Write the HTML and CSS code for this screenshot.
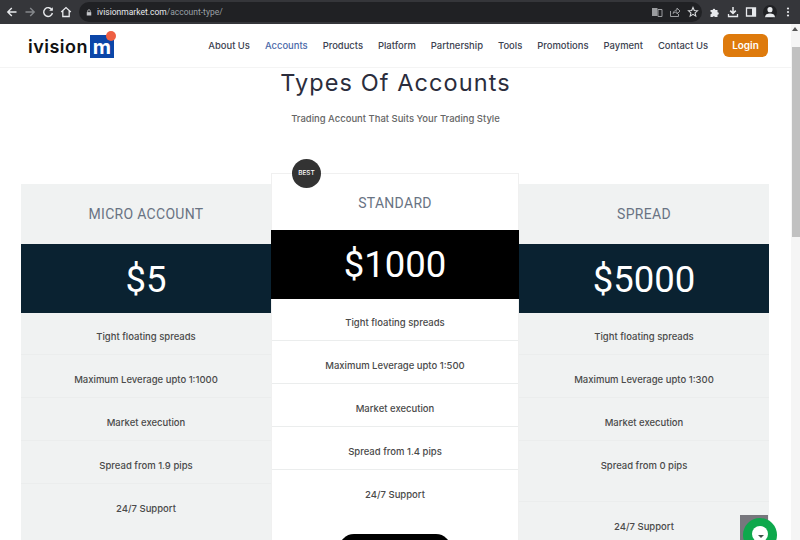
FILE: index.html
```html
<!DOCTYPE html>
<html lang="en">
<head>
<meta charset="utf-8">
<title>Types Of Accounts</title>
<link rel="stylesheet" href="styles.css">
</head>
<body>
<header class="chrome">
  <div class="chrome-nav">
    <svg class="ci" viewBox="0 0 12 12"><path d="M10.5 6H2M5.8 2 1.8 6l4 4" fill="none" stroke="#e8eaed" stroke-width="1.4"/></svg>
    <svg class="ci" viewBox="0 0 12 12"><path d="M1.5 6H10M6.2 2l4 4-4 4" fill="none" stroke="#85888c" stroke-width="1.4"/></svg>
    <svg class="ci" viewBox="0 0 12 12"><path d="M10 4A4.4 4.4 0 1 0 10.4 7" fill="none" stroke="#e8eaed" stroke-width="1.4"/><path d="M10.8 1.2v3.6H7.2z" fill="#e8eaed"/></svg>
    <svg class="ci" viewBox="0 0 12 12"><path d="M1.2 6 6 1.600 10.800 6M2.800 5v5.500h6.400V5" fill="none" stroke="#e8eaed" stroke-width="1.300"/></svg>
  </div>
  <div class="omnibox">
    <svg class="lock" viewBox="0 0 8 10"><path d="M1 4.500h6V9H1z" fill="#c4c7ca"/><path d="M2.300 4.500V3a1.700 1.700 0 0 1 3.400 0v1.500" fill="none" stroke="#c4c7ca"/></svg>
    <span class="url">ivisionmarket.com<span class="url-path">/account-type/</span></span>
    <span class="omni-icons">
      <svg class="ci" viewBox="0 0 12 12"><path d="M1 2h5.500v8H1z" fill="#9a9c9f"/><path d="M7 3.500h4v7H7z" fill="none" stroke="#9a9c9f"/></svg>
      <svg class="ci" viewBox="0 0 12 12"><path d="M1.500 5v5.500h8V8M4 7.500C4.500 5 6.500 4 8 4V2l3 3-3 3V6C6.500 6 5 6.300 4 7.500z" fill="none" stroke="#9a9c9f"/></svg>
      <svg class="ci" viewBox="0 0 12 12"><path d="m6 1.500 1.300 3 3.200.3-2.400 2.100.7 3.200L6 8.400l-2.800 1.700.7-3.200L1.500 4.800l3.200-.3z" fill="none" stroke="#d8dadd" stroke-width="1.100"/></svg>
    </span>
  </div>
  <div class="chrome-ext">
    <svg class="ci" viewBox="0 0 12 12"><path d="M1.500 4h2.200a1.300 1.300 0 0 1 2.600 0h2.200v2.200a1.300 1.300 0 0 1 0 2.600v2.200h-2.500a1.300 1.300 0 0 0-2.400 0H1.500V8.300a1.300 1.300 0 0 0 0-2.600z" fill="#e8eaed"/></svg>
    <svg class="ci" viewBox="0 0 12 12"><path d="M6 1v6M3.200 4.600 6 7.400l2.800-2.800" fill="none" stroke="#e8eaed" stroke-width="1.500"/><path d="M1.500 8v2.500h9V8" fill="none" stroke="#e8eaed" stroke-width="1.300"/></svg>
    <svg class="ci" viewBox="0 0 12 12"><path d="M1.500 2h9v8h-9z" fill="none" stroke="#e8eaed" stroke-width="1.300"/><path d="M7 2h3.500v8H7z" fill="#e8eaed"/></svg>
    <span class="avatar"><svg viewBox="0 0 12 12"><circle cx="6" cy="4" r="2.200" fill="#e8eaed"/><path d="M1.800 10.500c0-2.500 2-3.300 4.200-3.300s4.200.8 4.200 3.300z" fill="#e8eaed"/></svg></span>
    <svg class="ci" viewBox="0 0 12 12"><circle cx="6" cy="2.500" r="1.100" fill="#e8eaed"/><circle cx="6" cy="6" r="1.100" fill="#e8eaed"/><circle cx="6" cy="9.500" r="1.100" fill="#e8eaed"/></svg>
  </div>
</header>

<div class="viewport">
  <main class="page">
    <nav class="navbar">
      <a class="logo" href="#"><span class="logo-word">ivision</span><span class="logo-mark">m<i class="logo-dot"></i></span></a>
      <ul class="menu">
        <li>About Us</li>
        <li class="active">Accounts</li>
        <li>Products</li>
        <li>Platform</li>
        <li>Partnership</li>
        <li>Tools</li>
        <li>Promotions</li>
        <li>Payment</li>
        <li>Contact Us</li>
      </ul>
      <a class="login" href="#">Login</a>
    </nav>

    <section class="intro">
      <h1>Types Of Accounts</h1>
      <p>Trading Account That Suits Your Trading Style</p>
    </section>

    <section class="plans">
      <article class="plan">
        <h2>MICRO ACCOUNT</h2>
        <div class="price">$5</div>
        <ul class="features">
          <li>Tight floating spreads</li>
          <li>Maximum Leverage upto 1:1000</li>
          <li>Market execution</li>
          <li>Spread from 1.9 pips</li>
          <li>24/7 Support</li>
        </ul>
      </article>
      <article class="plan plan-best">
        <span class="badge">BEST</span>
        <h2>STANDARD</h2>
        <div class="price">$1000</div>
        <ul class="features">
          <li>Tight floating spreads</li>
          <li>Maximum Leverage upto 1:500</li>
          <li>Market execution</li>
          <li>Spread from 1.4 pips</li>
          <li>24/7 Support</li>
        </ul>
        <a class="cta" href="#"></a>
      </article>
      <article class="plan">
        <h2>SPREAD</h2>
        <div class="price">$5000</div>
        <ul class="features">
          <li>Tight floating spreads</li>
          <li>Maximum Leverage upto 1:300</li>
          <li>Market execution</li>
          <li class="tall">Spread from 0 pips</li>
          <li>24/7 Support</li>
        </ul>
      </article>
    </section>
    <span class="to-top"></span>
    <span class="chat"><i class="chat-bubble"></i></span>
  </main>
  <aside class="scrollbar"><span class="sb-up"></span><span class="sb-thumb"></span></aside>
</div>
</body>
</html>
```

FILE: styles.css
```css
* { box-sizing: border-box; }
html, body { margin: 0; height: 540px; overflow: hidden; }
body { font-family: "Inter", "Liberation Sans", sans-serif; background: #fff; color: #333; display: flex; flex-direction: column; }
ul { list-style: none; margin: 0; padding: 0; }
a { text-decoration: none; }

.chrome { height: 24px; flex: none; background: #35363a; display: flex; align-items: center; padding: 0 6px; }
.chrome-nav { display: flex; gap: 6px; align-items: center; width: 73px; }
.ci { width: 12px; height: 12px; flex: none; }
.omnibox { width: 623px; height: 20px; background: #202124; border-radius: 10px; display: flex; align-items: center; padding: 0 3px 0 7px; }
.lock { width: 6px; height: 9px; margin-right: 5px; }
.url { font: 8.500px "Roboto", sans-serif; color: #e8eaed; }
.url-path { color: #9aa0a6; }
.omni-icons { margin-left: auto; display: flex; gap: 6px; }
.chrome-ext { margin-left: auto; display: flex; gap: 6px; align-items: center; }
.avatar { width: 14px; height: 14px; border-radius: 50%; background: #202124; display: block; margin-right: -1px; }
.avatar svg { display: block; width: 14px; height: 14px; }

.viewport { flex: 1; display: flex; min-height: 0; }
.page { flex: 1; position: relative; overflow: hidden; }
.scrollbar { width: 9px; background: #f5f5f5; display: flex; flex-direction: column; align-items: flex-end; position: relative; }
.sb-up { width: 0; height: 0; margin: 3px 2px 0 0; border: 3px solid transparent; border-top: 0; border-bottom: 4px solid #555; }
.sb-thumb { width: 8px; height: 190px; margin-top: 16px; background: #c1c1c1; }

.navbar { height: 44px; display: flex; align-items: center; padding: 0 23px 0 28px; border-bottom: 1px solid #f4f4f4; }
.logo { display: flex; align-items: center; gap: 4px; margin-top: 1px; }
.logo-word { width: 58px; font: 600 18px "Inter", sans-serif; color: #111; letter-spacing: .5px; white-space: nowrap; }
.logo-mark { position: relative; width: 24px; height: 23px; background: #0b46a8; color: #fff; font: 700 20px/24px "Inter", sans-serif; text-align: center; }
.logo-dot { position: absolute; right: -2px; top: -4px; width: 10px; height: 10px; border-radius: 50%; background: #ee5f43; }
.menu { display: flex; gap: 15px; margin-left: auto; font-size: 9.430px; font-weight: 500; color: #3c4250; }
.menu .active { color: #4a69a8; }
.login { margin-left: 15px; width: 45px; height: 23px; border-radius: 6px; background: #de7a0c; color: #fff; font-size: 10px; font-weight: 600; line-height: 23px; text-align: center; }

.intro { text-align: center; padding-top: 1px; }
.intro h1 { margin: 0; font-size: 23.500px; line-height: 28px; font-weight: 400; letter-spacing: 1.090px; color: #2b2d3c; }
.intro p { margin: 16px 0 0; font-size: 9.470px; line-height: 12px; font-weight: 500; color: #666; }

.plans { display: flex; align-items: flex-start; margin: 59px 0 0 21px; width: 748px; }
.plan { flex: 1; background: #f0f2f2; text-align: center; }
.plan h2 { margin: 0; height: 60px; font: 400 14px/60px "Roboto", sans-serif; letter-spacing: .3px; color: #697383; }
.price { height: 69px; background: #0a2231; color: #fff; font: 400 36.500px/71px "Roboto", sans-serif; }
.features li { height: 43px; border-bottom: 1px solid #ebeded; padding-top: 18px; font-size: 9.500px; line-height: 14px; font-weight: 500; color: #4a4a4a; }
.features li:first-child { height: 42px; padding-top: 17px; }
.features li.tall { height: 61px; }
.features li:last-child { border-bottom: 0; height: 60px; }

.plan-best { position: relative; flex: none; width: 248px; margin-top: -11px; background: #fff; border: 1px solid #f0f0f0; border-width: 1px 1px 0; }
.plan-best h2 { height: 56px; line-height: 58px; }
.plan-best .price { margin: 0 -1px; background: #000; line-height: 69px; }
.badge { position: absolute; left: 20px; top: -15px; width: 29px; height: 29px; border-radius: 50%; background: #333; color: #fff; font-size: 6.500px; font-weight: 500; line-height: 29px; }
.cta { display: block; margin: 4px auto 0; width: 112px; height: 30px; border-radius: 15px; background: #000; }

.to-top { position: absolute; left: 740px; top: 491px; width: 28px; height: 30px; background: #77777d; }
.chat { position: absolute; left: 743px; top: 494px; width: 34px; height: 34px; border-radius: 50%; background: #0ea84c; }
.chat-bubble { position: absolute; left: 9px; top: 8px; width: 16px; height: 16px; border-radius: 50%; background: #fff; }
.chat-bubble::after { content: ""; position: absolute; left: 6px; top: 9px; border: 3px solid transparent; border-bottom: 0; border-top: 3px solid #40514a; }
```
